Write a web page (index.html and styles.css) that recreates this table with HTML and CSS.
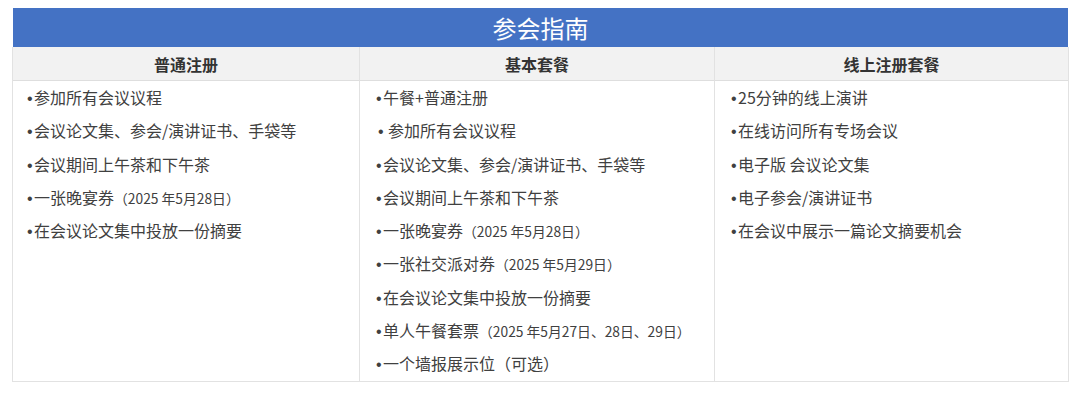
FILE: index.html
```html
<!DOCTYPE html>
<html lang="zh-CN">
<head>
<meta charset="utf-8">
<title>参会指南</title>
<link rel="stylesheet" href="styles.css">
</head>
<body>
<div class="page">
  <div class="title">参会指南</div>
  <div class="table">
    <div class="head">普通注册</div>
    <div class="head">基本套餐</div>
    <div class="head">线上注册套餐</div>
    <ul class="col">
      <li><span class="b">•</span>参加所有会议议程</li>
      <li><span class="b">•</span>会议论文集、参会/演讲证书、手袋等</li>
      <li><span class="b">•</span>会议期间上午茶和下午茶</li>
      <li><span class="b">•</span>一张晚宴券<span class="sm">（2025 年5月28日）</span></li>
      <li><span class="b">•</span>在会议论文集中投放一份摘要</li>
    </ul>
    <ul class="col">
      <li><span class="b">•</span>午餐+普通注册</li>
      <li><span class="b sp">•</span>参加所有会议议程</li>
      <li><span class="b">•</span>会议论文集、参会/演讲证书、手袋等</li>
      <li><span class="b">•</span>会议期间上午茶和下午茶</li>
      <li><span class="b">•</span>一张晚宴券<span class="sm">（2025 年5月28日）</span></li>
      <li><span class="b">•</span>一张社交派对券<span class="sm">（2025 年5月29日）</span></li>
      <li><span class="b">•</span>在会议论文集中投放一份摘要</li>
      <li><span class="b">•</span>单人午餐套票<span class="sm">（2025 年5月27日、28日、29日）</span></li>
      <li><span class="b">•</span>一个墙报展示位（可选）</li>
    </ul>
    <ul class="col">
      <li><span class="b">•</span>25分钟的线上演讲</li>
      <li><span class="b">•</span>在线访问所有专场会议</li>
      <li><span class="b">•</span>电子版 会议论文集</li>
      <li><span class="b">•</span>电子参会/演讲证书</li>
      <li><span class="b">•</span>在会议中展示一篇论文摘要机会</li>
    </ul>
  </div>
</div>
</body>
</html>
```
FILE: styles.css
```css
html, body {
  margin: 0;
  padding: 0;
  background: #ffffff;
}
body {
  font-family: "Noto Sans CJK SC", "Microsoft YaHei", sans-serif;
  color: #404040;
}
.page {
  padding: 8px 13px 0 12px;
}
.title {
  margin: 0 1px;
  height: 39px;
  background: #4472c4;
  color: #ffffff;
  font-size: 24px;
  line-height: 39px;
  text-align: center;
}
.table {
  display: grid;
  grid-template-columns: 346px 355px 1fr;
  border: 1px solid #e2e2e2;
  border-top: 0;
}
.head {
  height: 33px;
  background: #f2f2f2;
  border-bottom: 1px solid #dedede;
  font-size: 16px;
  font-weight: bold;
  color: #333333;
  text-align: center;
  line-height: 34px;
}
.head + .head,
.col + .col {
  border-left: 1px solid #e2e2e2;
}
.col {
  list-style: none;
  margin: 0;
  padding: 0 0 0 14px;
}
.col + .col {
  padding-left: 16px;
}
.col li {
  font-size: 16px;
  height: 33.3px;
  line-height: 33.3px;
  white-space: nowrap;
}
.b {
  font-family: "Liberation Sans", Arial, sans-serif;
  font-size: 16px;
  line-height: 1;
  display: inline-block;
  width: 6px;
  margin-right: 1px;
}
.b.sp {
  margin-left: 2px;
  margin-right: 4px;
}
.sm {
  font-size: 13.8px;
  line-height: 1;
}
```
